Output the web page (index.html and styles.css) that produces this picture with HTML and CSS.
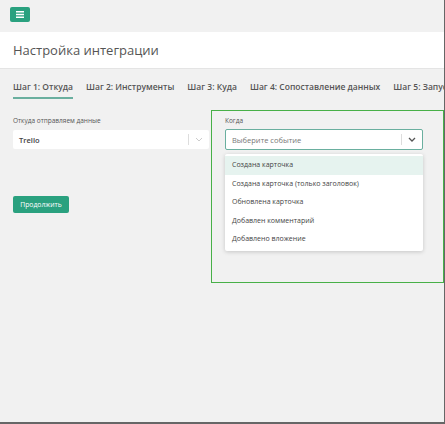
FILE: index.html
```html
<!DOCTYPE html>
<html lang="ru">
<head>
  <meta charset="UTF-8" />
  <meta name="viewport" content="width=device-width, initial-scale=1.0" />
  <title>Настройка интеграции</title>
  <link rel="stylesheet" href="styles.css">
</head>
<body>
  <div class="frame">
    <div class="topbar">
      <button class="menu-btn">
        <svg width="8" height="7" viewBox="0 0 8 7"><path d="M0 0.75h8M0 3.5h8M0 6.25h8" stroke="#fff" stroke-width="1.3"/></svg>
      </button>
    </div>

    <div class="page-header">
      <h1>Настройка интеграции</h1>
    </div>

    <div class="content">
      <div class="tabs">
        <span class="tab active">Шаг 1: Откуда</span>
        <span class="tab">Шаг 2: Инструменты</span>
        <span class="tab">Шаг 3: Куда</span>
        <span class="tab">Шаг 4: Сопоставление данных</span>
        <span class="tab">Шаг 5: Запуск</span>
      </div>

      <div class="fields">
        <div class="col-source">
          <label class="field-label">Откуда отправляем данные</label>
          <div class="select">
            <span class="select-value">Trello</span>
            <span class="select-sep"></span>
            <svg class="chevron" width="8" height="5" viewBox="0 0 8 5"><path d="M1 1l3 3 3-3" fill="none" stroke="#ccc" stroke-width="1"/></svg>
          </div>
          <button class="btn-next">Продолжить</button>
        </div>

        <!-- блок выбора события подсвечен -->
        <div class="col-when">
          <label class="field-label">Когда</label>
          <div class="select focused">
            <span class="select-placeholder">Выберите событие</span>
            <span class="select-sep"></span>
            <svg class="chevron" width="8" height="5" viewBox="0 0 8 5"><path d="M1 1l3 3 3-3" fill="none" stroke="#555" stroke-width="1.3"/></svg>
          </div>
          <ul class="menu">
            <li class="hover">Создана карточка</li>
            <li>Создана карточка (только заголовок)</li>
            <li>Обновлена карточка</li>
            <li>Добавлен комментарий</li>
            <li>Добавлено вложение</li>
          </ul>
        </div>

        <div class="col-next">
          <label class="field-label">По</label>
          <div class="select"></div>
        </div>
      </div>
    </div>
  </div>
</body>
</html>
```

FILE: styles.css
```css
* {
  box-sizing: border-box;
}

body {
  margin: 0;
  font-family: 'Open Sans', sans-serif;
  background: #f1f1f1;
  color: #555;
}

.frame {
  width: 445px;
  height: 424px;
  overflow: hidden;
  border-right: 1px solid #666;
  border-bottom: 2px solid #666;
  background: #f1f1f1;
}

.topbar {
  height: 32px;
  padding: 7px 10px;
}

.menu-btn {
  width: 20px;
  height: 15px;
  border: none;
  border-radius: 2px;
  background: #2aa17f;
  padding: 0;
  display: flex;
  align-items: center;
  justify-content: center;
}

.page-header {
  background: #fff;
  height: 37px;
  border-bottom: 1px solid #e4e4e4;
  padding: 0 13px;
  display: flex;
  align-items: center;
}

h1 {
  margin: 0;
  font-size: 13px;
  font-weight: 400;
  color: #555;
}

.content {
  padding: 0 0 0 13px;
}

.tabs {
  display: flex;
  gap: 13px;
  white-space: nowrap;
  margin-top: 12px;
}

.tab {
  font-size: 8.5px;
  font-weight: 600;
  color: #555;
  padding-bottom: 5px;
  flex-shrink: 0;
}

.tab.active {
  border-bottom: 2px solid #6aaf9f;
}

.fields {
  display: flex;
  margin-top: 11px;
}

.field-label {
  display: block;
  font-size: 6.5px;
  color: #555;
  margin-bottom: 5px;
}

.col-source {
  width: 196px;
  flex-shrink: 0;
  padding-top: 6px;
}

.select {
  height: 19px;
  background: #fff;
  display: flex;
  align-items: center;
  padding: 0 0 0 6px;
  border-radius: 2px;
}

.select-value {
  font-size: 7.5px;
  font-weight: 600;
  color: #444;
  flex: 1;
}

.select-placeholder {
  font-size: 7.5px;
  color: #777;
  flex: 1;
}

.select-sep {
  width: 1px;
  height: 11px;
  background: #ddd;
}

.chevron {
  margin: 0 6px 0 6px;
}

.btn-next {
  margin-top: 47px;
  width: 56px;
  height: 17px;
  border: none;
  border-radius: 2px;
  background: #2aa17f;
  color: #fff;
  font-family: 'Open Sans', sans-serif;
  font-size: 6.8px;
  padding: 0;
}

.col-when {
  margin-left: 2px;
  width: 233px;
  height: 173px;
  flex-shrink: 0;
  border: 1.5px solid #48b048;
  padding: 5px 20px 0 13px;
}

.select.focused {
  height: 21px;
  margin-top: -1px;
  border: 1px solid #6aaf9f;
}

.menu {
  list-style: none;
  margin: 4px 0 0;
  padding: 2px 0;
  background: #fff;
  box-shadow: 0 1px 4px rgba(0,0,0,0.18);
  border-radius: 2px;
}

.menu li {
  height: 18.5px;
  line-height: 18.5px;
  padding: 0 7px;
  font-size: 7px;
  color: #444;
}

.menu li.hover {
  background: #e6f3ef;
}

.col-next {
  margin-left: 10px;
  width: 100px;
  flex-shrink: 0;
  padding-top: 6px;
}

.col-next .select {
  border: 1px solid #ddd;
}
```
